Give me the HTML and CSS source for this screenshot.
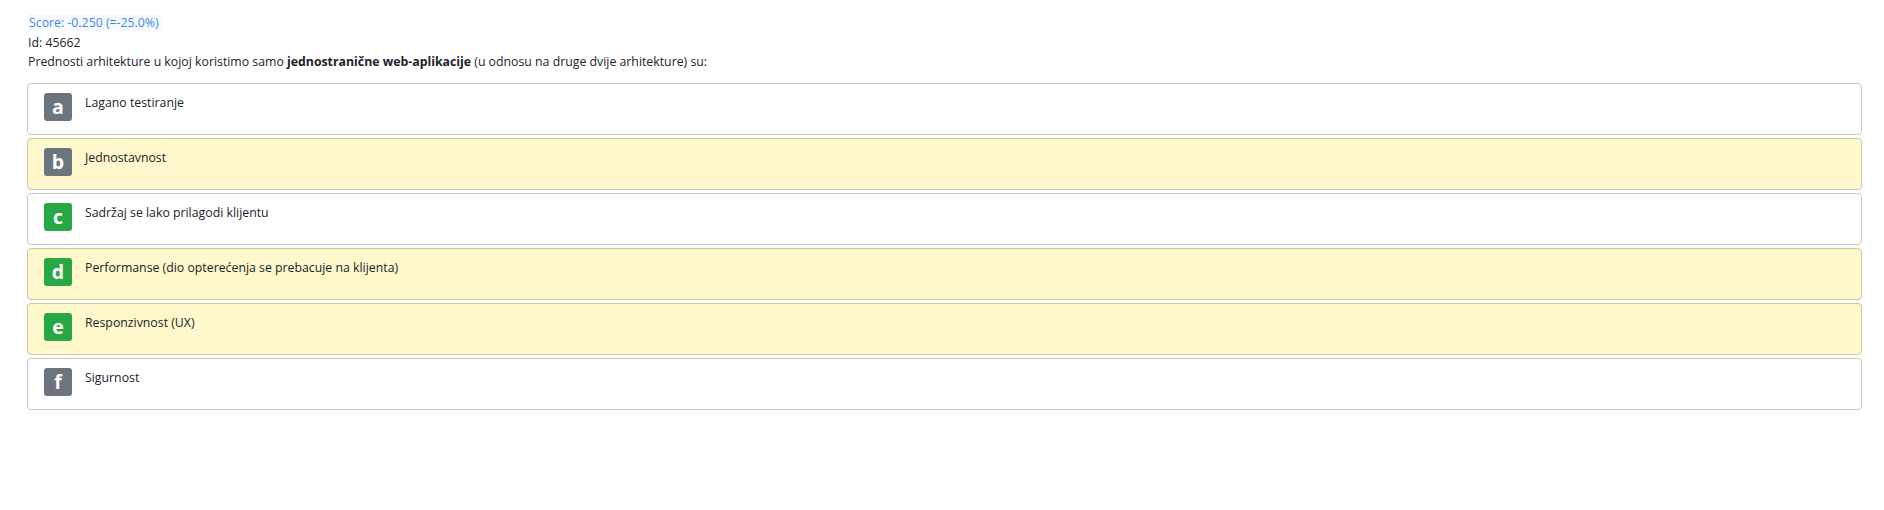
FILE: index.html
```html
<!DOCTYPE html>
<html lang="hr">
<head>
<meta charset="utf-8">
<title>Pitanje 45662</title>
<link rel="stylesheet" href="styles.css">
</head>
<body>
<div class="page">
  <div class="line"><span class="score">Score: -0.250 (=-25.0%)</span></div>
  <div class="line">Id: 45662</div>
  <div class="line">Prednosti arhitekture u kojoj koristimo samo <b>jednostranične web-aplikacije</b> (u odnosu na druge dvije arhitekture) su:</div>
  <div class="answers">
    <div class="answer"><span class="badge gray">a</span><span class="text">Lagano testiranje</span></div>
    <div class="answer marked"><span class="badge gray">b</span><span class="text">Jednostavnost</span></div>
    <div class="answer"><span class="badge green">c</span><span class="text">Sadržaj se lako prilagodi klijentu</span></div>
    <div class="answer marked"><span class="badge green">d</span><span class="text">Performanse (dio opterećenja se prebacuje na klijenta)</span></div>
    <div class="answer marked"><span class="badge green">e</span><span class="text">Responzivnost (UX)</span></div>
    <div class="answer"><span class="badge gray">f</span><span class="text">Sigurnost</span></div>
  </div>
</div>
</body>
</html>
```

FILE: styles.css
```css
html, body {
  margin: 0;
  padding: 0;
  background: #ffffff;
}

body {
  font-family: "Open Sans", "Noto Sans", sans-serif;
  font-size: 12.3px;
  line-height: 19.5px;
  color: #212529;
}

.page {
  padding: 13px 22px 0 27px;
}

.score {
  color: #3b87f4;
  background: #f7f9fc;
  padding: 0 2px 0 1px;
}

.line {
  padding-left: 1px;
}

.answers {
  margin-top: 11px;
  display: flex;
  flex-direction: column;
  gap: 2.5px;
}

.answer {
  display: flex;
  align-items: flex-start;
  gap: 13px;
  height: 52.5px;
  box-sizing: border-box;
  padding: 9px 16px;
  border: 1px solid #c6c6c6;
  border-radius: 4px;
  background: #ffffff;
}

.answer.marked {
  background: #fff8cd;
  border-color: #cdc7a2;
}

.badge {
  width: 28px;
  height: 28px;
  flex: none;
  border-radius: 3px;
  color: #ffffff;
  font-weight: 700;
  font-size: 19.5px;
  line-height: 28px;
  text-align: center;
}

.badge.gray {
  background: #6c747e;
}

.badge.green {
  background: #27a844;
}

.text {
  padding-top: 2px;
  line-height: 16px;
}
```
